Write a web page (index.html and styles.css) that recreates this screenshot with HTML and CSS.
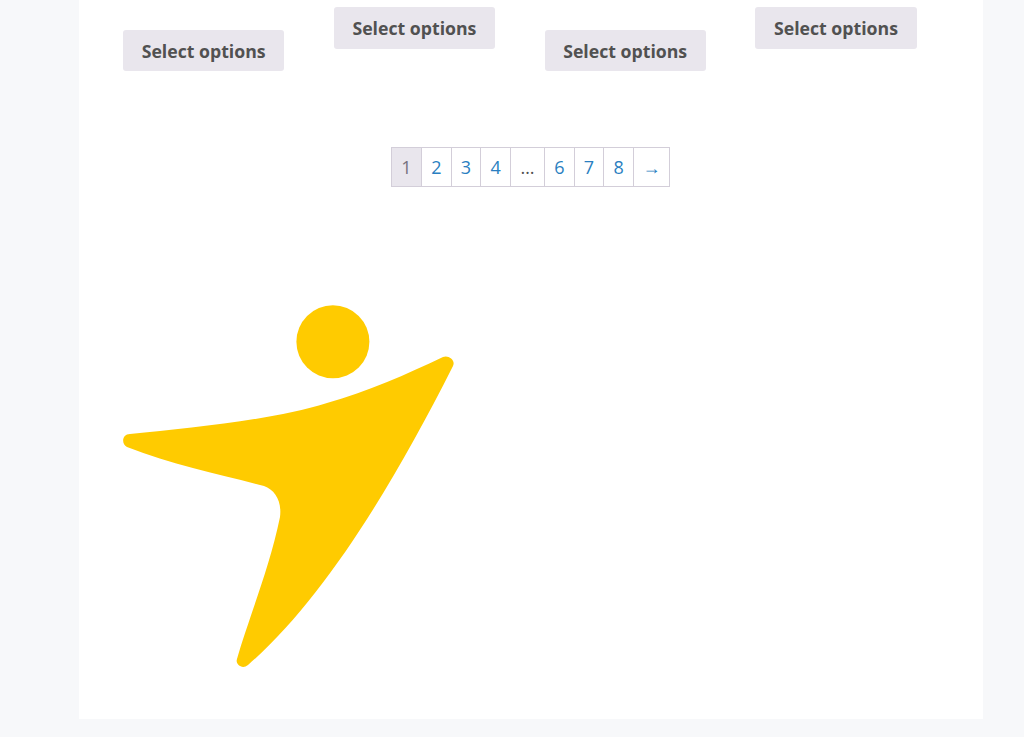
FILE: index.html
```html
<!DOCTYPE html>
<html lang="en">

<head>
    <meta charset="UTF-8">
    <meta name="viewport" content="width=device-width, initial-scale=1.0">
    <title>Shop</title>
    <link rel="stylesheet" href="styles.css">
</head>

<body>
    <div class="content">
        <!-- Produkt Buttons -->
        <div class="products">
            <div class="product low"><a class="button" href="#">Select options</a></div>
            <div class="product"><a class="button" href="#">Select options</a></div>
            <div class="product low"><a class="button" href="#">Select options</a></div>
            <div class="product"><a class="button" href="#">Select options</a></div>
        </div>

        <!-- Pagination -->
        <ul class="pagination">
            <li class="current">1</li>
            <li><a href="#">2</a></li>
            <li><a href="#">3</a></li>
            <li><a href="#">4</a></li>
            <li class="dots">…</li>
            <li><a href="#">6</a></li>
            <li><a href="#">7</a></li>
            <li><a href="#">8</a></li>
            <li class="next"><a href="#">→</a></li>
        </ul>

        <!-- Logo -->
        <svg class="logo" width="334" height="364" viewBox="0 0 334 364">
            <circle cx="210.9" cy="36.7" r="36.5" />
            <path d="M8 129 C70 123 150 115 205 98 C245 87 285 69 321 52 C326 49.5 334 55 331 61 C271 180 201 295 126 360 C120 365 113 359 115 354 C126 315 147 265 158 212 C160 196 153 185 142 181 C101 170 51 160 5 142 C-1 139 0 129 8 129 Z" />
        </svg>
    </div>
</body>

</html>
```

FILE: styles.css
```css
body {
    font-family: 'Open Sans', 'Noto Sans', sans-serif;
    margin: 0;
    padding: 0;
    background: #f7f8fa;
    color: #515151;
}

.content {
    width: 904px;
    height: 718.5px;
    margin-left: 79px;
    padding: 7.3px 44px 0;
    box-sizing: border-box;
    background: #fff;
}

.products {
    display: grid;
    grid-template-columns: repeat(4, 161.3px);
    justify-content: space-between;
    height: 63.7px;
    width: 793.6px;
}

.product.low {
    padding-top: 22.4px;
}

.button {
    display: block;
    height: 41.6px;
    line-height: 43px;
    border-radius: 3px;
    background: #e9e6ed;
    color: #515151;
    font-size: 17.7px;
    font-weight: 700;
    text-align: center;
    text-decoration: none;
}

.pagination {
    display: flex;
    width: max-content;
    height: 40px;
    margin: 76px 0 0 268px;
    padding: 0;
    list-style: none;
    border: 1px solid #d3ced9;
    box-sizing: border-box;
    font-size: 18px;
}

.pagination li {
    display: flex;
    align-items: center;
    justify-content: center;
    width: 28.67px;
    padding-top: 1px;
    border-right: 1px solid #d3ced9;
    box-sizing: content-box;
}

.pagination a {
    color: #2a7fc1;
    text-decoration: none;
}

.pagination .current {
    width: 29px;
    background: #e9e6ed;
    color: #75727f;
}

.pagination .dots {
    width: 33px;
}

.pagination .next {
    width: 35.3px;
    padding-top: 0;
    border-right: 0;
}

.logo {
    display: block;
    margin: 118px 0 0 -1px;
    fill: #ffcb00;
}
```
